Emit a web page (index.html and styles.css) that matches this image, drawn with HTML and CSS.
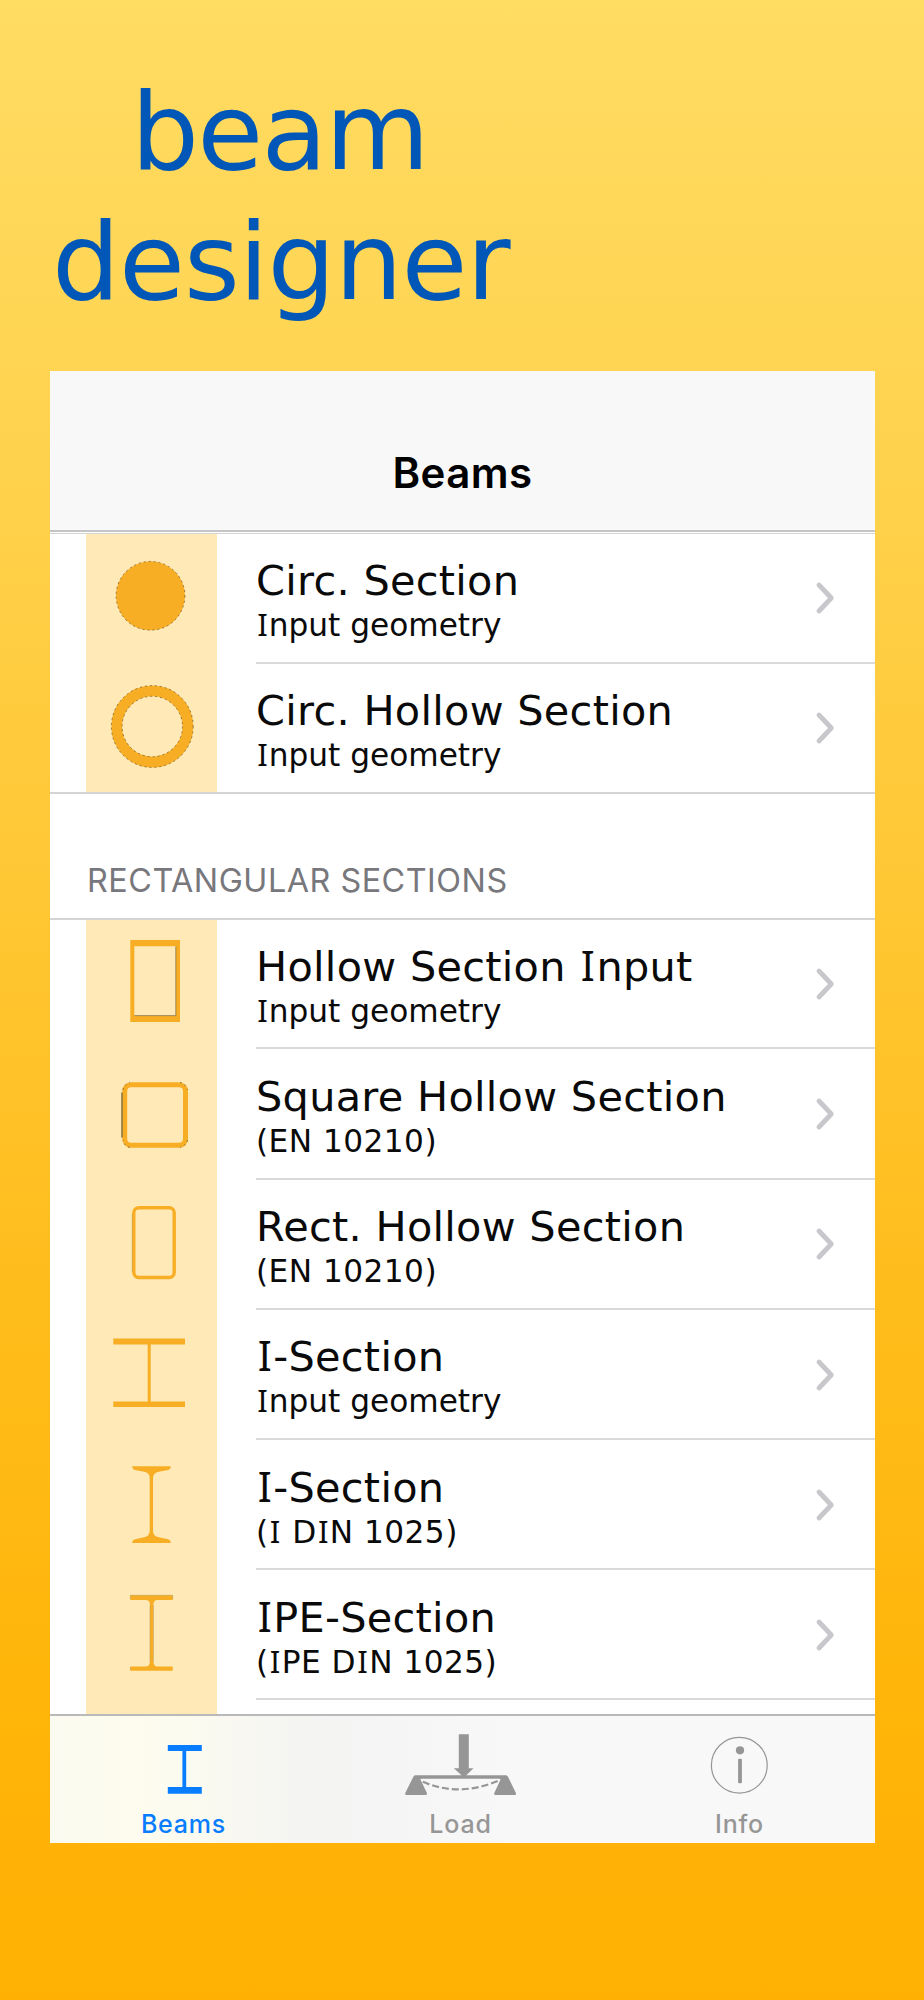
FILE: index.html
```html
<!DOCTYPE html>
<html lang="en">
<head>
<meta charset="utf-8">
<title>beam designer</title>
<link rel="stylesheet" href="styles.css">
</head>
<body>
<h1 class="headline"><span class="headline-beam">beam</span><span class="headline-designer">designer</span></h1>
<div class="phone">
  <header class="navbar"><span class="navbar-title">Beams</span></header>
  <main class="content">
    <ul class="list list-round">
      <li class="row">
        <svg class="shape" viewBox="0 0 131 130"><circle class="fill" cx="64.5" cy="61.8" r="34.5"/><circle class="edge" cx="64.5" cy="61.8" r="34.4"/></svg>
        <div class="cell"><div class="text"><div class="title">Circ. Section</div><div class="sub"><span class="i">I</span>nput geometry</div></div><svg class="chevron" viewBox="0 0 20 34"><path d="M4 4 L16.3 17 L4 30"/></svg></div>
      </li>
      <li class="row">
        <svg class="shape" viewBox="0 0 131 130"><circle class="ring" cx="66.3" cy="62.5" r="35.6"/><circle class="edge" cx="66.3" cy="62.5" r="40.9"/><circle class="edge" cx="66.3" cy="62.5" r="30.2"/></svg>
        <div class="cell"><div class="text"><div class="title">Circ. Hollow Section</div><div class="sub"><span class="i">I</span>nput geometry</div></div><svg class="chevron" viewBox="0 0 20 34"><path d="M4 4 L16.3 17 L4 30"/></svg></div>
      </li>
    </ul>
    <h2 class="section">RECTANGULAR SECTIONS</h2>
    <ul class="list list-rect">
      <li class="row">
        <svg class="shape" viewBox="0 0 131 130"><path class="fill" fill-rule="evenodd" d="M44.3 20H94V102H44.3ZM48.3 26.3V96H90V26.3Z"/><path class="hair" d="M48.3 95.6H89.8V26.5"/></svg>
        <div class="cell"><div class="text"><div class="title">Hollow Section <span class="i">I</span>nput</div><div class="sub"><span class="i">I</span>nput geometry</div></div><svg class="chevron" viewBox="0 0 20 34"><path d="M4 4 L16.3 17 L4 30"/></svg></div>
      </li>
      <li class="row">
        <svg class="shape" viewBox="0 0 131 130"><rect class="tube" x="38.7" y="34.7" width="60.8" height="60.6" rx="6.5" stroke-width="5"/><path class="hair hair-strong" d="M36 42.5V87.5"/><path class="edge" d="M37 40Q38 34 44 32.3M94 32.3Q100 34 101.6 40M101.6 90Q100 96 94 97.5M44 97.5Q38 96 37 90"/></svg>
        <div class="cell"><div class="text"><div class="title">Square Hollow Section</div><div class="sub sub-code">(EN 10210)</div></div><svg class="chevron" viewBox="0 0 20 34"><path d="M4 4 L16.3 17 L4 30"/></svg></div>
      </li>
      <li class="row">
        <svg class="shape" viewBox="0 0 131 130"><rect class="tube" x="47.8" y="27.7" width="40.4" height="69.8" rx="5" stroke-width="3.4"/><path class="hair hair-faint" d="M46.2 34V92"/></svg>
        <div class="cell"><div class="text"><div class="title">Rect. Hollow Section</div><div class="sub sub-code">(EN 10210)</div></div><svg class="chevron" viewBox="0 0 20 34"><path d="M4 4 L16.3 17 L4 30"/></svg></div>
      </li>
      <li class="row">
        <svg class="shape" viewBox="0 0 131 130"><path class="fill" d="M27.3 28.4H99V34.4H64.7V91.4H99V97.1H27.3V91.4H61.7V34.4H27.3Z"/></svg>
        <div class="cell"><div class="text"><div class="title"><span class="i">I</span>-Section</div><div class="sub"><span class="i">I</span>nput geometry</div></div><svg class="chevron" viewBox="0 0 20 34"><path d="M4 4 L16.3 17 L4 30"/></svg></div>
      </li>
      <li class="row">
        <svg class="shape" viewBox="0 0 131 130"><path class="fill" d="M46.3 26.2H84.7Q85 29.5 81 30.2L74 31.6Q67 32.5 67 38V91Q67 96.5 74 97.5L81 98.9Q85 99.6 84.7 102.9H46.3Q46 99.6 50 98.9L57 97.5Q63.7 96.5 63.7 91V38Q63.7 32.5 57 31.6L50 30.2Q46 29.5 46.3 26.2Z"/></svg>
        <div class="cell"><div class="text"><div class="title"><span class="i">I</span>-Section</div><div class="sub sub-code">(<span class="i">I</span> D<span class="i">I</span>N 1025)</div></div><svg class="chevron" viewBox="0 0 20 34"><path d="M4 4 L16.3 17 L4 30"/></svg></div>
      </li>
      <li class="row">
        <svg class="shape" viewBox="0 0 131 130"><path class="fill" d="M44.3 24.3H86.7V29H71.5Q67.5 29 67.3 34V90Q67.5 95.5 71.5 95.5H86.7V99.7H44.3V95.5H59.5Q64 95.5 64 90V34Q64 29 59.5 29H44.3Z"/><path class="hair hair-faint" d="M44.3 28V24.3H86.7V28M64 34V91M67.5 34V91M44.4 99V96"/></svg>
        <div class="cell"><div class="text"><div class="title"><span class="i">I</span>PE-Section</div><div class="sub sub-code">(<span class="i">I</span>PE D<span class="i">I</span>N 1025)</div></div><svg class="chevron" viewBox="0 0 20 34"><path d="M4 4 L16.3 17 L4 30"/></svg></div>
      </li>
      <li class="row row-next"></li>
    </ul>
  </main>
  <nav class="tabbar">
    <a class="tab tab-active"><svg class="tab-icon" viewBox="0 0 114 72"><path d="M40.8 20H74.8V26H59.2V62H74.8V68.7H40.8V62H55.4V26H40.8Z"/></svg><span>Beams</span></a>
    <a class="tab"><svg class="tab-icon" viewBox="0.7 0 114 72"><path d="M55.5 9.3H65.5V43.3H70.2L63 50.2H102.5Q103.8 50.2 104.4 51.2L112.6 68Q113.2 70 111.4 70H92.3Q90.3 70 91 68L97 55Q97.5 53.7 96 53.7H18Q16.5 53.7 17.4 55L23.6 68Q24.2 70 22.3 70H3.3Q1.2 70 2 68L10.3 51.2Q10.9 50.2 12 50.2H58.2L50.5 43.3H55.5Z"/><path d="M19.5 56.8Q56 72.5 95.5 55.5" fill="none" stroke="currentColor" stroke-width="2.2" stroke-dasharray="7 3"/></svg><span>Load</span></a>
    <a class="tab"><svg class="tab-icon" viewBox="0.5 0 114 72"><circle cx="56.8" cy="40.2" r="27.9" fill="none" stroke="currentColor" stroke-width="1.2"/><circle cx="57.5" cy="25.3" r="4.1"/><rect x="55.6" y="33.7" width="3.8" height="24.5" rx="1"/></svg><span>Info</span></a>
  </nav>
</div>
</body>
</html>
```
FILE: styles.css
```css
* { box-sizing: border-box; }
body {
  margin: 0;
  height: 2000px;
  overflow: hidden;
  background: linear-gradient(#ffdc62 0, #ffd452 370px, #ffc836 850px, #ffbd1c 1290px, #ffb407 1750px, #ffb003 2000px);
  font-family: "DejaVu Sans", Verdana, sans-serif;
}
.headline {
  margin: 0;
  height: 371px;
  padding: 67px 0 0 52px;
  font-size: 107.2px;
  font-weight: 400;
  line-height: 130.2px;
  letter-spacing: -1px;
  color: #0057b8;
  display: flex;
  flex-direction: column;
}
.headline-beam { padding-left: 79px; letter-spacing: -1.8px; }
.phone {
  width: 825px;
  height: 1472px;
  margin-left: 50px;
  background: #fff;
  display: flex;
  flex-direction: column;
}
.navbar {
  height: 161px;
  flex: none;
  padding-top: 76px;
  text-align: center;
  background: #f8f8f8;
  border-bottom: 2px solid #c5c5c5;
}
.navbar-title {
  font: 600 42px/52px Inter, sans-serif;
  letter-spacing: .4px;
  color: #000;
}
.content { height: 1182px; flex: none; overflow: hidden; }
.list {
  margin: 0;
  padding: 0;
  list-style: none;
  border-top: 2px solid rgba(0, 0, 0, .17);
  background: linear-gradient(#ffe9b6, #ffe9b6) 36px 0 / 131px 100% no-repeat;
}
.list-round {
  margin-top: 1px;
  border-top-width: 1px;
  border-bottom: 2px solid rgba(0, 0, 0, .17);
}
.row {
  height: 130.2px;
  padding-left: 36px;
  display: flex;
}
.list-round .row:last-child { height: 128.2px; }
.list-round .row:last-child .cell { border: 0; }
.list-rect .row:first-child { height: 129.2px; }
.shape { width: 131px; height: 130px; flex: none; }
.list-rect .shape { margin-top: .4px; }
.list-rect .row:first-child .shape { margin-top: 0; }
.fill { fill: #f8ae24; }
.ring { fill: none; stroke: #f8ae24; stroke-width: 10.8; }
.tube { fill: none; stroke: #f8ae24; }
.edge { fill: none; stroke: #6b5528; stroke-width: .7; stroke-dasharray: 2 3; }
.hair { fill: none; stroke: #75602f; stroke-width: .7; }
.hair-strong { stroke-width: 1.3; }
.hair-faint { stroke: #a08a52; stroke-width: .4; }
.cell {
  flex: 1;
  margin-left: 39px;
  padding: 25px 40px 0 0;
  border-bottom: 2px solid #d9d9db;
  display: flex;
  justify-content: space-between;
}
.list-rect .cell { padding-top: 25.7px; }
.list-rect .row:first-child .cell { padding-top: 24.6px; }
.text { white-space: nowrap; color: #0a0a0a; }
.title { font-size: 41.4px; line-height: 44px; margin-bottom: 2px; letter-spacing: .3px; }
.sub { font-size: 31.2px; line-height: 40px; }
.sub-code { letter-spacing: .45px; }
.i { font-family: "Noto Sans", sans-serif; line-height: 1px; margin: 0 .03em 0 .04em; }
.chevron { width: 20px; height: 34px; margin-top: 22.2px; fill: none; stroke: #c7c7cc; stroke-width: 4.8; stroke-linecap: round; stroke-linejoin: round; }
.section {
  margin: 0;
  height: 123.8px;
  padding: 65px 0 0 37px;
  font: 400 32.3px/44px Inter, sans-serif;
  letter-spacing: .53px;
  color: #77777c;
}
.row-next { height: 40px; }
.tabbar {
  height: 129px;
  flex: none;
  border-top: 2px solid #b9b9b9;
  background: linear-gradient(90deg, #fafaf0 0, #fdfcee 80px, #fbfaf0 150px, #f4f4f3 250px, #f5f5f5 340px, #f8f8f8 460px);
  display: grid;
  grid-template-columns: 267px 287px 271px;
}
.tab {
  padding-top: 9px;
  display: flex;
  flex-direction: column;
  align-items: center;
  gap: 12px;
  font: 500 25px/30px Inter, sans-serif;
  letter-spacing: .8px;
  color: #969696;
}
.tab-active { color: #087dff; }
.tab-icon { width: 114px; height: 72px; fill: currentColor; }
```
